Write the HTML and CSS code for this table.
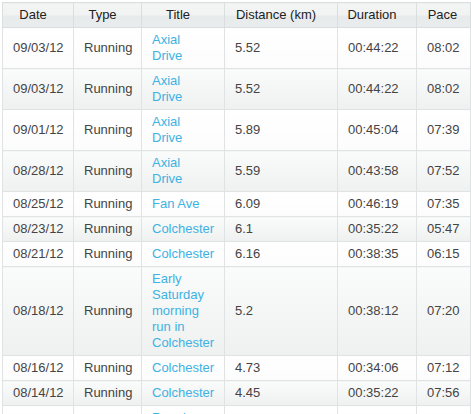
FILE: index.html
```html
<!DOCTYPE html>
<html>
<head>
<meta charset="utf-8">
<link rel="stylesheet" href="styles.css">
</head>
<body>
<table class="runs">
  <colgroup>
    <col class="c-date"><col class="c-type"><col class="c-title"><col class="c-dist"><col class="c-dur"><col class="c-pace">
  </colgroup>
  <thead>
    <tr><th>Date</th><th>Type</th><th>Title</th><th>Distance (km)</th><th>Duration</th><th>Pace</th></tr>
  </thead>
  <tbody>
    <tr><td>09/03/12</td><td>Running</td><td><a href="#">Axial Drive</a></td><td>5.52</td><td>00:44:22</td><td>08:02</td></tr>
    <tr><td>09/03/12</td><td>Running</td><td><a href="#">Axial Drive</a></td><td>5.52</td><td>00:44:22</td><td>08:02</td></tr>
    <tr><td>09/01/12</td><td>Running</td><td><a href="#">Axial Drive</a></td><td>5.89</td><td>00:45:04</td><td>07:39</td></tr>
    <tr><td>08/28/12</td><td>Running</td><td><a href="#">Axial Drive</a></td><td>5.59</td><td>00:43:58</td><td>07:52</td></tr>
    <tr><td>08/25/12</td><td>Running</td><td><a href="#">Fan Ave</a></td><td>6.09</td><td>00:46:19</td><td>07:35</td></tr>
    <tr><td>08/23/12</td><td>Running</td><td><a href="#">Colchester</a></td><td>6.1</td><td>00:35:22</td><td>05:47</td></tr>
    <tr><td>08/21/12</td><td>Running</td><td><a href="#">Colchester</a></td><td>6.16</td><td>00:38:35</td><td>06:15</td></tr>
    <tr><td>08/18/12</td><td>Running</td><td><a href="#">Early Saturday morning run in Colchester</a></td><td>5.2</td><td>00:38:12</td><td>07:20</td></tr>
    <tr><td>08/16/12</td><td>Running</td><td><a href="#">Colchester</a></td><td>4.73</td><td>00:34:06</td><td>07:12</td></tr>
    <tr><td>08/14/12</td><td>Running</td><td><a href="#">Colchester</a></td><td>4.45</td><td>00:35:22</td><td>07:56</td></tr>
    <tr><td>08/12/12</td><td>Running</td><td><a href="#">Running around Colchester</a></td><td>5.01</td><td>00:40:10</td><td>08:01</td></tr>
  </tbody>
</table>
</body>
</html>
```

FILE: styles.css
```css
html, body {
  margin: 0;
  padding: 0;
  background: #fff;
}
body {
  padding: 2px 0 0 2px;
  font-family: "Liberation Sans", Arial, sans-serif;
  font-size: 13px;
  color: #444;
}
.runs {
  border-collapse: collapse;
  table-layout: fixed;
  width: 468px;
  border: 1px solid #d9dedf;
}
.c-date { width: 71px; }
.c-type { width: 68px; }
.c-title { width: 83px; }
.c-dist { width: 113px; }
.c-dur { width: 79px; }
.c-pace { width: 54px; }

.runs th {
  height: 24px;
  padding: 0 15px 0 5px;
  font-weight: normal;
  color: #222;
  text-align: center;
  line-height: 16px;
  border: 1px solid #d9dedf;
  background: linear-gradient(#f3f5f5 0%, #f1f3f3 50%, #e8ebeb 52%, #e9ecec 100%);
}
.runs th:last-child { padding: 0 10px 0 8px; }
.runs td {
  padding: 4px 10px;
  line-height: 16px;
  vertical-align: middle;
  text-align: left;
  border: 1px solid #dfe3e4;
  background: linear-gradient(#ffffff, #fcfcfc);
}
.runs tbody tr:nth-child(even) td {
  background: linear-gradient(#fafbfb, #eff1f1);
}
.runs a {
  color: #3db2e3;
  text-decoration: none;
}
```
